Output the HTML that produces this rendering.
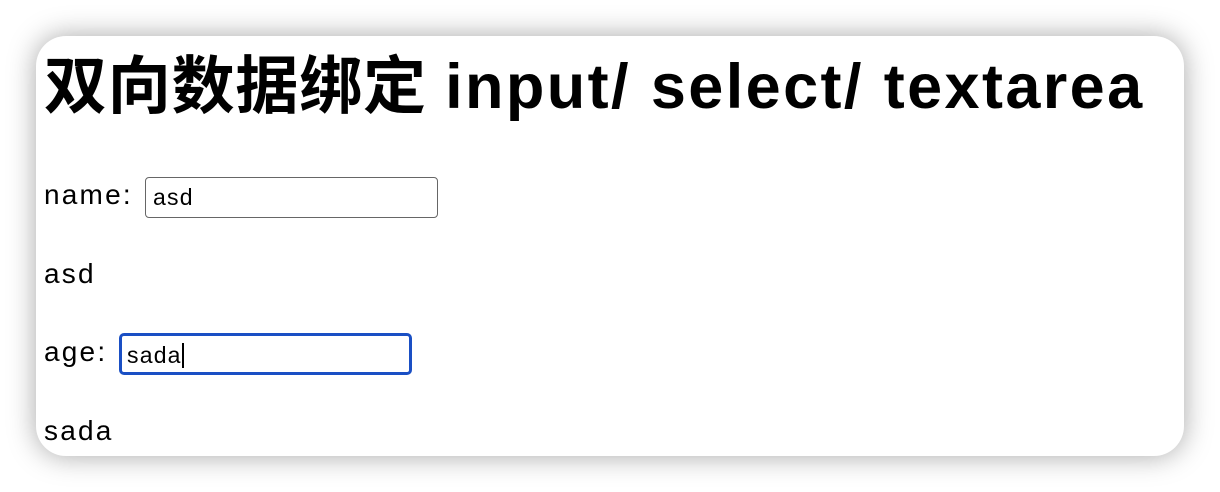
<!DOCTYPE html>
<html><head><meta charset="utf-8"><style>
html,body{margin:0;padding:0;width:1220px;height:492px;background:#fff;overflow:hidden}
.card{position:absolute;left:36px;top:36px;width:1148px;height:420px;background:#fff;border-radius:30px;box-shadow:0 0 28px rgba(0,0,0,0.35);overflow:hidden}
.t{position:absolute;white-space:nowrap;font-family:"Liberation Sans","Noto Sans CJK SC",sans-serif;color:#000;line-height:1;font-size:28px;letter-spacing:2.2px}
h1{position:absolute;left:8px;top:20px;margin:0;font-size:63px;font-weight:bold;white-space:nowrap;font-family:"Liberation Sans","Noto Sans CJK SC",sans-serif;line-height:1;letter-spacing:0.8px}
h1 span{letter-spacing:2.4px}
.in{position:absolute;box-sizing:border-box;background:#fff;font-family:"Liberation Sans",sans-serif;font-size:23px;line-height:1;letter-spacing:1.2px}
</style></head><body>
<div class="card">
<h1>双向数据绑定 <span>input/ select/ textarea</span></h1>
<div class="t" style="left:8px;top:145px">name:</div>
<div class="in" style="left:109px;top:141px;width:293px;height:41px;border:1.5px solid #666;border-radius:4px;padding:8px 0 0 7px">asd</div>
<div class="t" style="left:8px;top:224px">asd</div>
<div class="t" style="left:8px;top:302px">age:</div>
<div class="in" style="left:83px;top:297px;width:293px;height:42px;border:3px solid #1a4fc4;border-radius:5px;padding:7px 0 0 5px">sada<span style="display:inline-block;width:2px;height:25px;background:#000;vertical-align:-5px"></span></div>
<div class="t" style="left:8px;top:381px">sada</div>
</div>
</body></html>
